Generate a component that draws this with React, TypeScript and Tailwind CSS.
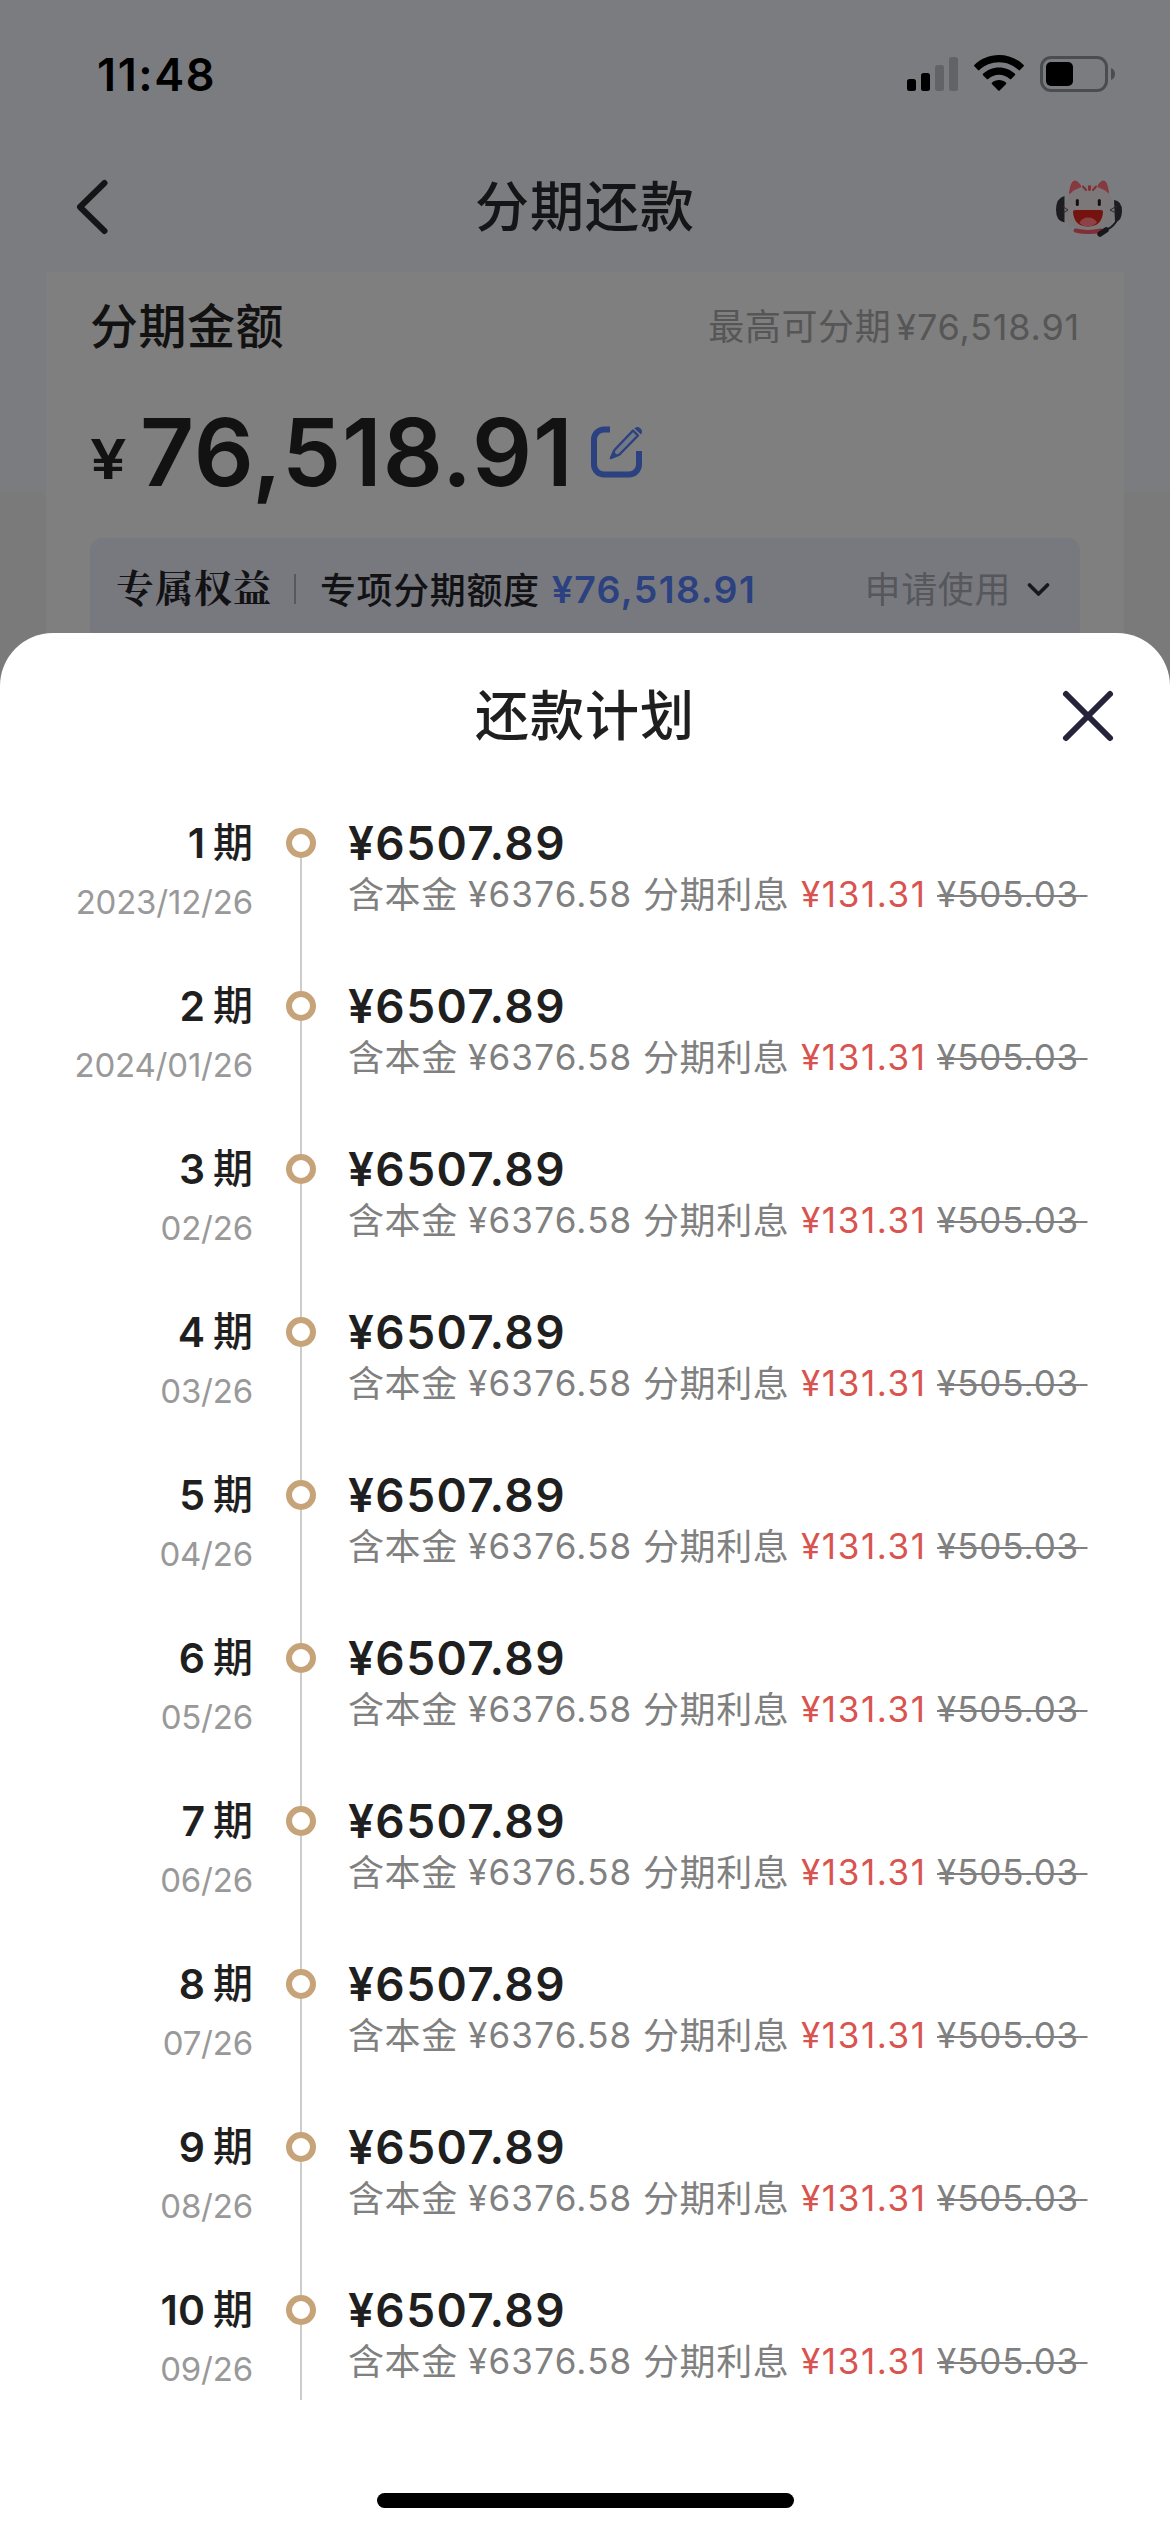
const plans = [
  { term: "1", date: "2023/12/26" },
  { term: "2", date: "2024/01/26" },
  { term: "3", date: "02/26" },
  { term: "4", date: "03/26" },
  { term: "5", date: "04/26" },
  { term: "6", date: "05/26" },
  { term: "7", date: "06/26" },
  { term: "8", date: "07/26" },
  { term: "9", date: "08/26" },
  { term: "10", date: "09/26" },
];

function StatusBar() {
  return (
    <div className="flex h-[150px] items-start justify-between pl-[97px] pr-[54px] pt-[54px] text-black">
      <span className="text-[45px] leading-[41px] font-semibold tracking-[1.6px]">11:48</span>
      <div className="flex items-start">
        <svg width="52" height="36" viewBox="0 0 52 36" className="mt-[1px]">
          <rect x="0" y="24" width="9" height="12" rx="2.5" />
          <rect x="14" y="18" width="9" height="18" rx="2.5" />
          <rect x="28" y="10" width="9" height="26" rx="2.5" fill="#626366" />
          <rect x="42" y="2" width="9" height="34" rx="2.5" fill="#626366" />
        </svg>
        <svg width="50" height="37" viewBox="0 0 50 37" className="ml-[15px]">
          <path d="M25 1C34.6 1 43.3 4.8 49.7 10.9 50.1 11.3 50.1 11.9 49.7 12.3L46 16.1C45.6 16.5 45 16.5 44.6 16.1 39.5 11.3 32.6 8.3 25 8.3S10.5 11.3 5.4 16.1C5 16.5 4.4 16.5 4 16.1L.3 12.3C-.1 11.9-.1 11.3 .3 10.9 6.7 4.8 15.4 1 25 1Z" />
          <path d="M25 13.5C31.2 13.5 36.8 15.9 41 19.8 41.4 20.2 41.4 20.8 41 21.2L37.2 25C36.8 25.4 36.2 25.4 35.8 25 33 22.4 29.2 20.8 25 20.8S17 22.4 14.2 25C13.8 25.4 13.2 25.4 12.8 25L9 21.2C8.6 20.8 8.6 20.2 9 19.8 13.2 15.9 18.8 13.5 25 13.5Z" />
          <path d="M25 26C27.7 26 30.2 27 32.1 28.7 32.5 29.1 32.5 29.7 32.1 30.1L25.7 36.4C25.3 36.8 24.7 36.8 24.3 36.4L17.9 30.1C17.5 29.7 17.5 29.1 17.9 28.7 19.8 27 22.3 26 25 26Z" />
        </svg>
        <svg width="76" height="37" viewBox="0 0 76 37" className="ml-[16px] mt-[1px]">
          <rect x="1.500" y="2.500" width="65" height="33" rx="9.500" fill="none" stroke="#4b4c4f" strokeWidth="3" />
          <rect x="6" y="7" width="27" height="24" rx="5" />
          <path d="M71 13C73.5 14 75 16.3 75 19S73.5 24 71 25Z" fill="#4b4c4f" />
        </svg>
      </div>
    </div>
  );
}

function CatAvatar() {
  return (
    <svg width="68" height="60" viewBox="0 0 68 60" className="-mt-px">
      <path d="M9.500 18Q1 20 1 32Q1 43 9.500 44.500ZM59 22Q67 23 67 33Q67 43 60 44Z" fill="#1d1d21" />
      <path d="M14 16Q15 3 20 2.500Q24 3 28 11ZM41 11Q44 3 48.500 2.500Q53 3 54 16Z" fill="#85353c" />
      <path d="M34.500 7C50 7 59 18 59 33C59 46 50 53.500 34.500 53.500S10 46 10 33C10 18 19 7 34.500 7Z" fill="#7c7879" />
      <path d="M15 14Q16 4 20 3.500Q23.500 4 26.500 9ZM42.500 9Q45.500 4 48.500 3.500Q52 4 53.500 14Z" fill="#87393f" />
      <path d="M28 8.500L31 12M41 8.500L38 12" stroke="#812f37" strokeWidth="2" strokeLinecap="round" />
      <path d="M33 7.500h3v4q-1.500 3.500-3 0Z" fill="#812f37" />
      <path d="M7 28L13 32L8 35M62 28L55 32L61 35" fill="none" stroke="#2b2b2f" strokeWidth="1" />
      <rect x="20.800" y="21" width="3" height="7" rx="1.500" fill="#101012" />
      <rect x="42.800" y="21" width="3" height="7" rx="1.500" fill="#101012" />
      <path d="M18 34Q18 32 20 32H46Q48 32 48 34Q47 48.500 33 48.500T18 34Z" fill="#75130f" />
      <path d="M24.500 45Q27 39.500 33 39.500T42 44.500Q38 48.500 33 48.500T24.500 45Z" fill="#8d4248" />
      <path d="M20.500 52.500Q33 55.500 46 52.500" fill="none" stroke="#812f37" strokeWidth="4" strokeLinecap="round" />
      <path d="M62 42Q59 48 53 51" fill="none" stroke="#1d1d21" strokeWidth="2" />
      <path d="M45 56L51 52" stroke="#18181b" strokeWidth="5.500" strokeLinecap="round" />
    </svg>
  );
}

function EditIcon() {
  return (
    <svg width="54" height="54" viewBox="0 0 54 54" fill="none" className="ml-[17px]">
      <path d="M19 3.500H13A10 10 0 0 0 3 13.500V38.500A10 10 0 0 0 13 48.500H38A10 10 0 0 0 48 38.500V25" stroke="#2b4180" strokeWidth="6" />
      <path d="M20 32L23.500 24L42 4.500L47 9.500L28.500 28.500Z" fill="#737885" stroke="#2b4180" strokeWidth="2.400" strokeLinejoin="round" />
      <path d="M43.500 2.500Q46 0 49 2Q52.500 5 50 8.500Z" fill="#2b4180" />
      <path d="M18.500 33.500L22 25L27.500 30Z" fill="#2b4180" />
    </svg>
  );
}

function PlanRow({ term, date, last }: { term: string; date: string; last: boolean }) {
  return (
    <li className={`flex ${last ? "h-[105px]" : "h-[163px]"}`}>
      <div className="w-[253px] text-right">
        <div className="flex items-center justify-end text-[41px] leading-[30px] font-semibold text-[#1f1f1f]">
          <span>{term}</span>
          <span className="ml-[8px] text-[40px] font-medium">期</span>
        </div>
        <div className="mt-[29px] text-[33px] leading-[30px] tracking-[-0.2px] text-[#999]">{date}</div>
      </div>
      <div className="ml-[33px] flex w-[30px] flex-col items-center">
        <span className="size-[30px] shrink-0 rounded-full border-[6px] border-[#c6a378] bg-white" />
        <span className="w-[2px] flex-1 bg-[#ccc]" />
      </div>
      <div className="ml-[32px] whitespace-nowrap">
        <div className="text-[46px] leading-[30px] font-semibold tracking-[1.4px] text-[#1f1f1f]">¥6507.89</div>
        <div className="mt-[20px] flex text-[35px] leading-[32px] text-[#808080]">
          <span className="mt-[1px] w-[120px] text-[36px] tracking-[0.6px]">含本金</span>
          <span className="w-[175px] tracking-[1.2px]">¥6376.58</span>
          <span className="mt-[1px] w-[158px] text-[36px] tracking-[0.6px]">分期利息</span>
          <span className="w-[136px] tracking-[1.6px] text-[#d9534f]">¥131.31</span>
          <span className="tracking-[0.9px] line-through decoration-2">
            ¥505.03<span className="tracking-[-1.5px]">&nbsp;</span>
          </span>
        </div>
      </div>
    </li>
  );
}

export default function App() {
  return (
    <div className="relative h-[2532px] w-[1170px] overflow-hidden bg-[#7a7a7b] font-['Inter','Noto_Sans_CJK_SC',sans-serif]">
      <div className="h-[492px] bg-[#7b7c80]">
        <StatusBar />
        <header className="flex h-[122px] items-start justify-between pl-[74px] pr-[47px] pt-[29px]">
          <svg width="36" height="58" viewBox="0 0 36 58" fill="none">
            <path d="M30.500 4L6 28L30.500 52" stroke="#151517" strokeWidth="6" strokeLinecap="round" strokeLinejoin="round" />
          </svg>
          <h1 className="ml-[5px] mt-[1px] text-[54px] leading-[56px] font-medium tracking-[1px] text-[#151517]">分期还款</h1>
          <CatAvatar />
        </header>

        <section className="mx-[46px] h-[400px] bg-[#7f7f7f] px-[44px]">
          <div className="flex items-center justify-between pt-[27px]">
            <h2 className="text-[48px] leading-[56px] font-medium tracking-[0.5px] text-[#121212]">分期金额</h2>
            <p className="flex text-[36px] leading-[56px] text-[#565656]">
              <span className="mr-[5px] tracking-[0.6px]">最高可分期</span>
              <span className="tracking-[0.8px]">¥76,518.91</span>
            </p>
          </div>
          <div className="mt-[50px] flex h-[95px] items-center text-[#121212]">
            <span className="mt-[12px] w-[36px] origin-left scale-x-[1.18] text-[55px] leading-[60px] font-semibold">¥</span>
            <span className="ml-[14px] text-[94px] leading-[95px] font-semibold tracking-[1px]">76,518.91</span>
            <EditIcon />
          </div>
          <div className="mt-[38px] flex h-[134px] items-start rounded-t-[12px] bg-[#78797f] pl-[26px] pr-[30px] pt-[27px] leading-[50px]">
            <span className="-mt-[4px] font-['Noto_Serif_CJK_SC','Noto_Serif_SC',serif] text-[38px] font-bold tracking-[1px] text-[#121214]">专属权益</span>
            <span className="ml-[22px] mt-[9px] h-[30px] w-[2px] bg-[#58595e]" />
            <span className="ml-[24px] mt-[1px] text-[36px] font-medium tracking-[0.6px] text-[#121214]">专项分期额度</span>
            <span className="ml-[12px] text-[37.5px] font-semibold tracking-[1.4px] text-[#2b4180]">¥76,518.91</span>
            <span className="ml-auto text-[36px] tracking-[0.6px] text-[#56575b]">申请使用</span>
            <svg width="24" height="17" viewBox="0 0 24 17" fill="none" className="ml-[15px] mt-[16px]">
              <path d="M3.500 4L12.500 13L21.500 4" stroke="#18181b" strokeWidth="3.600" strokeLinecap="round" strokeLinejoin="round" />
            </svg>
          </div>
        </section>
      </div>

      {/* Repayment plan sheet */}
      <div className="absolute inset-x-0 bottom-0 top-[633px] flex flex-col rounded-t-[53px] bg-white">
        <div className="flex h-[195px] items-start justify-between px-[55px] pt-[55px]">
          <span className="w-[54px]" />
          <h2 className="mt-[1px] text-[54px] leading-[56px] font-medium tracking-[1px] text-[#1f1f1f]">还款计划</h2>
          <svg width="54" height="54" viewBox="0 0 54 54" className="mt-[1px]">
            <path d="M5 5L49 49M49 5L5 49" stroke="#26243a" strokeWidth="6" strokeLinecap="round" />
          </svg>
        </div>
        <ul>
          {plans.map((plan, i) => (
            <PlanRow key={plan.term} {...plan} last={i === plans.length - 1} />
          ))}
        </ul>
        <div className="mx-auto mb-[24px] mt-auto h-[15px] w-[417px] rounded-full bg-black" />
      </div>
    </div>
  );
}
